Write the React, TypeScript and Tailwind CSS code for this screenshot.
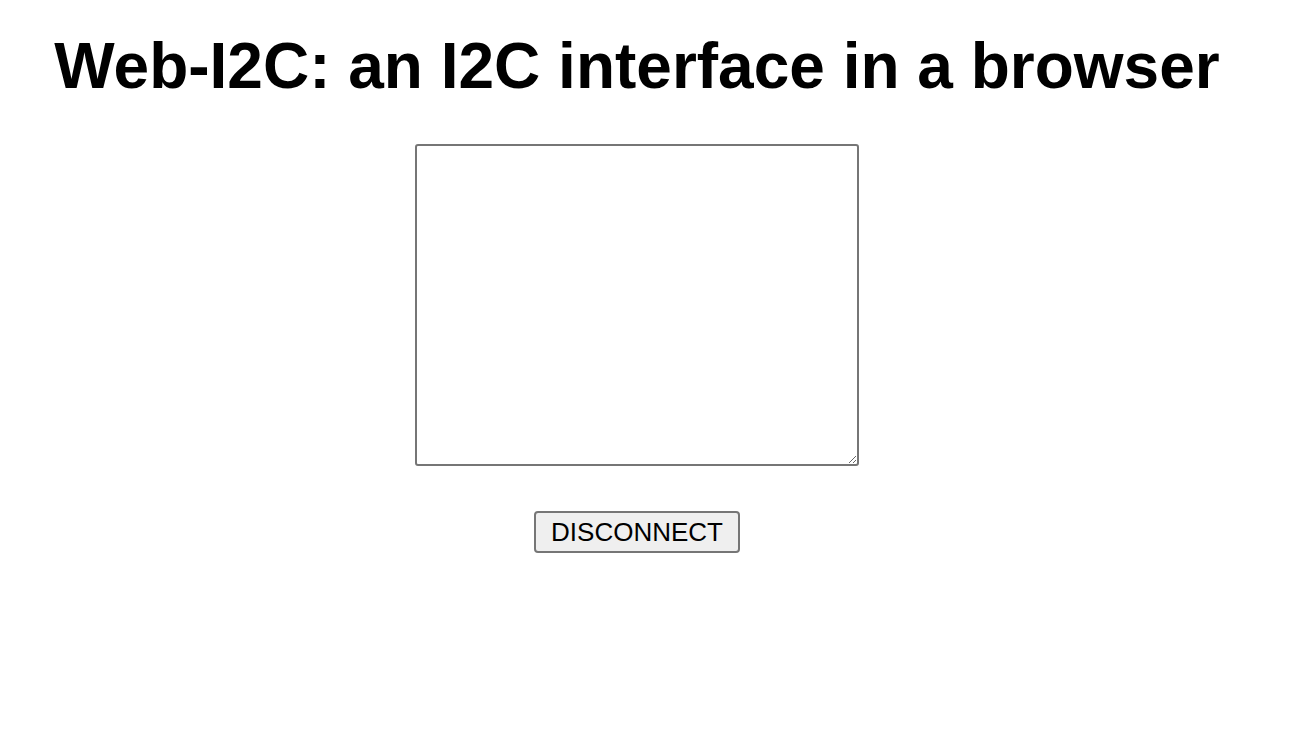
export default function App() {
  return (
    <div className="w-[1274px] min-h-[740px] bg-white text-black font-['Liberation_Sans',Arial,sans-serif]">
      <div className="flex flex-col items-center pt-[30px]">
        <h1 className="text-[64px] leading-[73px] font-bold whitespace-nowrap">
          Web-I2C: an I2C interface in a browser
        </h1>

        {/* log output */}
        <textarea
          className="mt-[41px] w-[444px] h-[322px] border-2 border-[#767676] rounded-[3px] bg-white p-1 text-base outline-none"
          defaultValue=""
        />

        <button className="mt-[45px] h-[42px] px-[15px] border-2 border-[#767676] rounded-[4px] bg-[#efefef] text-[26px] leading-[30px] text-black">
          DISCONNECT
        </button>
      </div>
    </div>
  );
}
